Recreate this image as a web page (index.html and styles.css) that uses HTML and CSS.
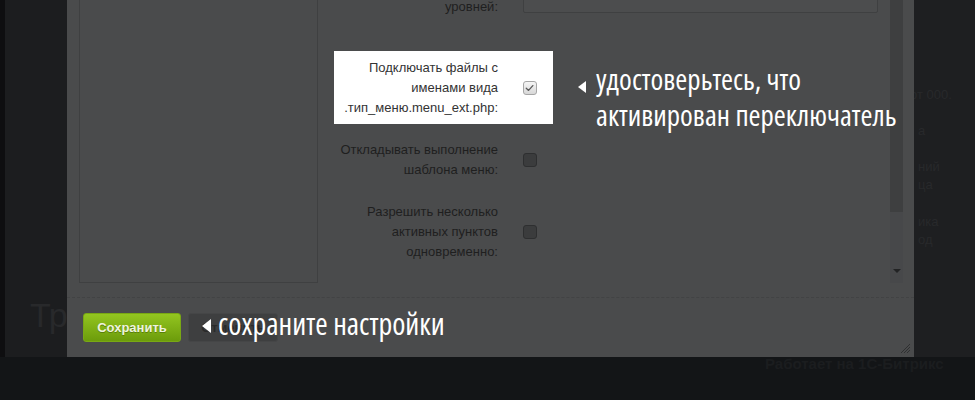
FILE: index.html
```html
<!DOCTYPE html>
<html lang="ru">
<head>
<meta charset="utf-8">
<title>Настройки меню</title>
<link rel="stylesheet" href="styles.css">
</head>
<body>
<div class="page">
  <div class="page-top">
    <div class="edge"></div>
    <div class="page-main">
      <div class="page-heading">Тренеры</div>
    </div>
    <div class="page-side">
      <div class="side-line l1">от 000.</div>
      <div class="side-line l2">а</div>
      <div class="side-line l3">ний</div>
      <div class="side-line l4">ца</div>
      <div class="side-line l5">ика</div>
      <div class="side-line l6">од</div>
    </div>
  </div>
  <div class="page-bottom">
    <div class="bottom-brand">Работает на 1С-Битрикс</div>
  </div>
</div>

<div class="dialog">
  <div class="dialog-main">
    <div class="sidebar"></div>
    <div class="content">
      <div class="row row-first">
        <div class="label">Максимальный уровень<br>уровней:</div>
        <div class="input"></div>
      </div>
      <div class="row row-hl">
        <div class="label label-hl">Подключать файлы с<br>именами вида<br>.тип_меню.menu_ext.php:</div>
        <div class="check check-on">
          <svg viewBox="0 0 14 14" width="14" height="14"><path d="M3.5 7.2 L6 9.6 L10.6 4.4" fill="none" stroke="#5a5a5a" stroke-width="1.4" stroke-linecap="round" stroke-linejoin="round"/></svg>
        </div>
      </div>
      <div class="row row-dim">
        <div class="label">Откладывать выполнение<br>шаблона меню:</div>
        <div class="check"></div>
      </div>
      <div class="row row-dim">
        <div class="label">Разрешить несколько<br>активных пунктов<br>одновременно:</div>
        <div class="check"></div>
      </div>
    </div>
    <div class="scrollbar">
      <div class="thumb"></div>
      <div class="arrow"></div>
    </div>
  </div>
  <div class="dialog-footer">
    <button class="btn btn-save">Сохранить</button>
    <button class="btn btn-cancel">Отменить</button>
    <div class="grip">
      <svg viewBox="0 0 12 12" width="12" height="12"><path d="M11 2 L2 11 M11 5 L5 11 M11 8 L8 11" stroke="#2f3031" stroke-width="1"/></svg>
    </div>
  </div>
</div>

<div class="note note-check">
  <span class="tri"></span>
  <div class="note-text">удостоверьтесь, что<br>активирован переключатель</div>
</div>
<div class="note note-save">
  <span class="tri"></span>
  <div class="note-text">сохраните настройки</div>
</div>
</body>
</html>
```
FILE: styles.css
```css
* { box-sizing: border-box; }
html, body {
  margin: 0;
  padding: 0;
}
body {
  width: 975px;
  height: 400px;
  overflow: hidden;
  position: relative;
  background: #1c1d1f;
  font-family: "Liberation Sans", Arial, sans-serif;
}

/* background page */
.page { width: 975px; height: 400px; display: flex; flex-direction: column; }
.page-top { height: 357px; display: flex; }
.edge { width: 5px; background: #0e0e10; }
.page-main { flex: 1; display: flex; align-items: flex-end; padding: 0 0 22px 25px; }
.page-heading { font-size: 34px; color: #28292b; line-height: 40px; white-space: nowrap; }
.page-side { width: 61px; padding-left: 4px; background: #1e1f21; position: relative; }
.side-line { position: absolute; left: 4px; font-size: 13px; color: #28292b; white-space: nowrap; }
.l1 { top: 87px; left: -4px; }
.l2 { top: 123px; }
.l3 { top: 159px; }
.l4 { top: 177px; }
.l5 { top: 214px; }
.l6 { top: 232px; }
.page-bottom { flex: 1; background: #131517; position: relative; }
.bottom-brand { position: absolute; left: 765px; top: -2px; font-size: 15px; font-weight: bold; color: #1b1d1f; white-space: nowrap; }

/* dialog */
.dialog {
  position: absolute;
  left: 67px;
  top: 0;
  width: 847px;
  height: 357px;
  background: #4a4b4c;
  display: flex;
  flex-direction: column;
}
.dialog-main {
  height: 297px;
  display: flex;
  padding: 0 11px 0 12px;
}
.sidebar {
  width: 239px;
  height: 283px;
  border: 1px solid #3f4041;
  border-top: none;
  background: #4a4b4c;
}
.content {
  width: 570px;
  height: 283px;
  margin-left: 2px;
  overflow: hidden;
  font-size: 13px;
  line-height: 20px;
}
.row {
  display: flex;
  align-items: center;
  width: 219px;
  margin-left: 14px;
  padding: 7px 16px 6px 0;
}
.row + .row { margin-top: 9px; }
.row-first {
  width: auto;
  padding: 0;
  margin-top: -23px;
  align-items: flex-end;
}
.row-first + .row { margin-top: 34px; }
.label {
  width: 164px;
  text-align: right;
  color: #1f1f1f;
  margin-right: 25px;
  white-space: nowrap;
}
.input {
  width: 355px;
  height: 26px;
  margin-bottom: 4px;
  border: 1px solid #3f4041;
  background: #4c4d4e;
  border-radius: 2px;
}
.row-hl { background: #ffffff; }
.label-hl { color: #333333; }
.check {
  width: 14px;
  height: 14px;
  flex: none;
  border-radius: 3px;
  border: 1px solid #2e2f30;
  background: #3b3c3d;
}
.check-on {
  border: 1px solid #a6a6a6;
  background: linear-gradient(#f6f6f6, #d8d8d8);
  display: flex;
  align-items: center;
  justify-content: center;
}
.check-on svg { display: block; margin-left: -1px; margin-top: -1px; }
.scrollbar {
  width: 13px;
  height: 283px;
  background: #47484a;
  position: relative;
}
.thumb { width: 13px; height: 212px; background: #3e3f40; }
.arrow {
  position: absolute;
  left: 3px;
  top: 269px;
  width: 0;
  height: 0;
  border-left: 4px solid transparent;
  border-right: 4px solid transparent;
  border-top: 4px solid #222324;
}

.dialog-footer {
  flex: 1;
  border-top: 1px dashed #424344;
  display: flex;
  align-items: flex-start;
  padding: 15px 0 0 16px;
  gap: 7px;
  position: relative;
}
.btn {
  height: 29px;
  border-radius: 3px;
  font-family: "Liberation Sans", Arial, sans-serif;
  font-size: 13px;
  font-weight: bold;
  padding: 0;
}
.btn-save {
  width: 98px;
  border: 1px solid #79a814;
  background: linear-gradient(#93c520, #6c9c0b);
  color: #eef3df;
  text-shadow: 0 1px 0 #5a7f0c;
}
.btn-cancel {
  width: 90px;
  border: 1px solid #454647;
  background: #3e3f40;
  color: #2a2b2c;
}
.grip { position: absolute; right: 3px; bottom: 3px; }
.grip svg { display: block; }

/* annotations */
.note {
  position: absolute;
  display: flex;
  align-items: flex-start;
  color: #ffffff;
  font-family: "Open Sans", "DejaVu Sans", sans-serif;
  font-stretch: 75%;
  font-weight: 400;
  line-height: 36px;
}
.note .tri {
  width: 0;
  height: 0;
  border-right: 8px solid #ffffff;
}
.note-text { white-space: nowrap; }
.note-check { left: 578px; top: 61px; font-size: 29px; }
.note-check .tri {
  border-top: 6px solid transparent;
  border-bottom: 6px solid transparent;
  margin-top: 20px;
  margin-right: 10px;
}
.note-save { left: 202px; top: 306px; font-size: 30px; }
.note-save .tri {
  border-top: 7px solid transparent;
  border-bottom: 7px solid transparent;
  border-right-width: 9px;
  margin-top: 13px;
  margin-right: 7px;
}
```
